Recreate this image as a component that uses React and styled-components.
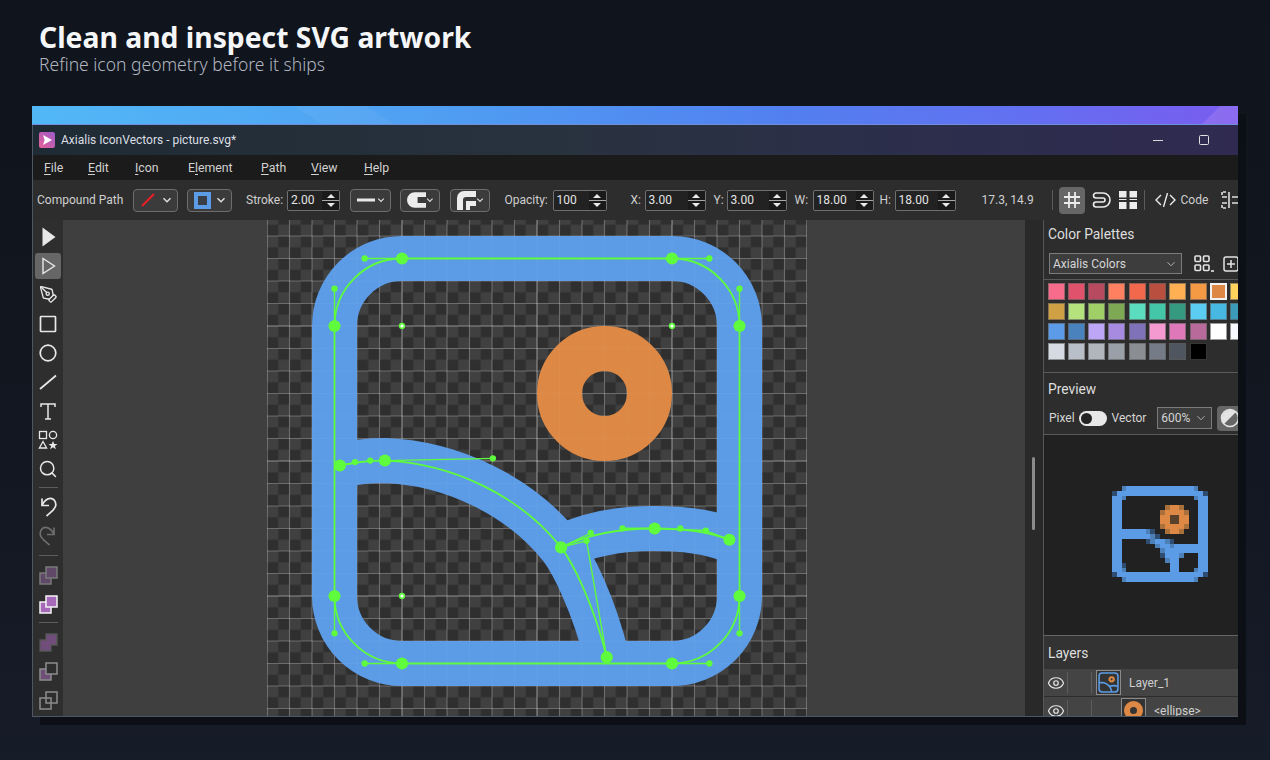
import React from "react";
import styled, { createGlobalStyle } from "styled-components";
import { Search, PenTool, Eye } from "lucide-react";

const GlobalStyle = createGlobalStyle`
  html, body { margin: 0; padding: 0; }
  body {
    width: 1270px;
    height: 760px;
    overflow: hidden;
    background: linear-gradient(180deg, #10141c 0%, #121721 60%, #161c28 100%);
    font-family: "Noto Sans", "Open Sans", sans-serif;
  }
`;

const Page = styled.div`
  padding: 22px 32px 0;
`;

const Hero = styled.header`
  padding-left: 7px;
  height: 84px;
`;

const Title = styled.h1`
  margin: 0;
  font-size: 28.3px;
  line-height: 30px;
  font-weight: 700;
  color: #f5f6f8;
`;

const Subtitle = styled.p`
  margin: 1px 0 0;
  font-size: 17.5px;
  line-height: 22px;
  font-weight: 300;
  color: #b0b6c0;
`;

const Window = styled.div`
  width: 1206px;
  height: 611px;
  display: flex;
  flex-direction: column;
  overflow: hidden;
  background: #2d2d2d;
  box-shadow: 8px 8px 0 #0c0f15;
  font-family: "Roboto", "Noto Sans", sans-serif;
`;

const Strip = styled.div`
  position: relative;
  height: 19px;
  flex: none;
  overflow: hidden;
  background: linear-gradient(90deg, #52b8f6 0%, #4f9df2 35%, #5280f0 62%, #6270f0 82%, #7a5cf0 100%);
  border-bottom: 1px solid #6f8fd8;
  box-sizing: border-box;
  &::after {
    content: "";
    position: absolute;
    top: 0;
    right: 0;
    width: 36px;
    height: 100%;
    background: #9373ef;
    opacity: 0.7;
    clip-path: polygon(50% 0, 100% 0, 100% 100%, 0 100%);
  }
  &::before {
    content: "";
    position: absolute;
    top: 0;
    left: 262px;
    width: 100px;
    height: 100%;
    background: #ffffff;
    opacity: 0.05;
    clip-path: polygon(0 0, 72% 0, 100% 100%, 28% 100%);
  }
`;

const Frame = styled.div`
  flex: 1;
  min-height: 0;
  display: flex;
  flex-direction: column;
  border-left: 1px solid #4d5763;
  border-bottom: 1px solid #4d5763;
`;

const TitleBar = styled.div`
  height: 30px;
  flex: none;
  display: flex;
  align-items: center;
  padding-left: 6px;
  background: linear-gradient(90deg, #1f2b34 0%, #29323f 45%, #2c2e4c 75%, #302a50 100%);
`;

const AppTitle = styled.span`
  margin-left: 6px;
  font-size: 12px;
  color: #dcdfe3;
`;

const WinButtons = styled.div`
  margin-left: auto;
  display: flex;
  align-items: center;
  gap: 36px;
  padding-right: 29px;
`;

const MinButton = styled.span`
  width: 10px;
  height: 1px;
  background: #d8d8d8;
`;

const MaxButton = styled.span`
  width: 8px;
  height: 8px;
  border: 1px solid #e0e0e0;
  border-radius: 1.5px;
`;

const MenuBar = styled.nav`
  height: 25px;
  flex: none;
  display: flex;
  align-items: center;
  padding-left: 11px;
  background: #1b1b1b;
`;

const MenuItem = styled.span`
  flex: none;
  width: ${(p) => p.$w}px;
  font-size: 12.3px;
  color: #d2d2d2;
  u { text-underline-offset: 2px; }
`;

const Toolbar = styled.div`
  height: 40px;
  flex: none;
  display: flex;
  align-items: center;
  padding-left: 4px;
  background: #2d2d2d;
  white-space: nowrap;
`;

const Label = styled.span`
  flex: none;
  margin-left: ${(p) => p.$ml || 0}px;
  width: ${(p) => p.$w}px;
  font-size: 12px;
  color: #cfcfcf;
`;

const DropButton = styled.div`
  flex: none;
  margin-left: ${(p) => p.$ml}px;
  width: ${(p) => p.$w}px;
  height: 23px;
  box-sizing: border-box;
  border: 1px solid #6d6d6d;
  border-radius: 4px;
  background: #3b3b3b;
  display: flex;
  align-items: center;
  justify-content: space-between;
  padding: 0 5px 0 6px;
`;

const Spinner = styled.div`
  flex: none;
  margin-left: ${(p) => p.$ml || 4}px;
  width: ${(p) => p.$w}px;
  height: 21px;
  box-sizing: border-box;
  border: 1px solid #6f6f6f;
  border-radius: 2px;
  background: #222222;
  display: flex;
  align-items: center;
  justify-content: space-between;
  padding-left: 3px;
  font-size: 12px;
  color: #e4e4e4;
`;

const SpinStack = styled.div`
  width: 17px;
  height: 100%;
  display: flex;
  flex-direction: column;
  justify-content: center;
  align-items: center;
  gap: 2px;
  background: #1a1a1a;
`;

const SpinUp = styled.i`
  width: 0;
  height: 0;
  border-left: 4px solid transparent;
  border-right: 4px solid transparent;
  border-bottom: 4px solid #e8e8e8;
`;

const SpinBar = styled.i`
  width: 100%;
  height: 1px;
  background: #a8a8a8;
`;

const SpinDown = styled.i`
  width: 0;
  height: 0;
  border-left: 4px solid transparent;
  border-right: 4px solid transparent;
  border-top: 4px solid #e8e8e8;
`;

const ToolSep = styled.span`
  flex: none;
  margin-left: ${(p) => p.$ml}px;
  width: 1px;
  height: 20px;
  background: #5c5c5c;
`;

const ToolIcon = styled.span`
  flex: none;
  margin-left: ${(p) => p.$ml}px;
  width: ${(p) => p.$w || 26}px;
  height: 27px;
  border-radius: 4px;
  display: flex;
  align-items: center;
  justify-content: center;
  color: #e6e6e6;
  background: ${(p) => (p.$active ? "#666666" : "transparent")};
`;

const Workspace = styled.div`
  flex: 1;
  min-height: 0;
  display: flex;
`;

const Rail = styled.aside`
  width: 30px;
  flex: none;
  padding-top: 2px;
  display: flex;
  flex-direction: column;
  align-items: center;
  background: #2e2e2e;
  overflow: hidden;
`;

const RailButton = styled.div`
  width: 26px;
  height: 26px;
  margin: 1.5px 0;
  flex: none;
  border-radius: 3px;
  display: flex;
  align-items: center;
  justify-content: center;
  color: ${(p) => (p.$dim ? "#6e6e6e" : "#e8e8e8")};
  background: ${(p) => (p.$active ? "#666666" : "transparent")};
`;

const RailSep = styled.div`
  width: 19px;
  height: 1px;
  flex: none;
  margin: ${(p) => p.$m}px 0 ${(p) => p.$b}px;
  background: #5e5e5e;
`;

const Canvas = styled.main`
  flex: 1;
  min-width: 0;
  overflow: hidden;
  background: #3f3f3f;
`;

const Artboard = styled.svg`
  display: block;
  width: 540px;
  height: 540px;
  margin: -29.5px 0 0 204px;
`;

const Gutter = styled.div`
  width: 18px;
  flex: none;
  padding-top: 237px;
  background: #292929;
`;

const ScrollThumb = styled.div`
  width: 3px;
  height: 73px;
  margin-left: 7px;
  border-radius: 2px;
  background: #8c8c8c;
`;

const Panel = styled.aside`
  width: 195px;
  flex: none;
  box-sizing: border-box;
  display: flex;
  flex-direction: column;
  overflow: hidden;
  border-left: 1px solid #565656;
  background: #2d2d2d;
`;

const PanelHeading = styled.div`
  height: ${(p) => p.$h}px;
  flex: none;
  padding: 0 4px;
  display: flex;
  align-items: center;
  font-size: 13.8px;
  color: #dedede;
`;

const PaletteRow = styled.div`
  height: 21px;
  flex: none;
  margin-top: 5px;
  padding-left: 5px;
  display: flex;
  align-items: center;
`;

const PaletteTool = styled.svg`
  flex: none;
  margin-left: ${(p) => p.$ml}px;
`;

const SelectBox = styled.div`
  flex: none;
  width: ${(p) => p.$w}px;
  height: ${(p) => p.$h}px;
  margin-left: ${(p) => p.$ml || 0}px;
  box-sizing: border-box;
  border: 1px solid #7b7b7b;
  background: #3d3d3d;
  display: flex;
  align-items: center;
  justify-content: space-between;
  padding: 0 5px 0 3px;
  font-size: 12px;
  color: #d6d6d6;
`;

const Divider = styled.div`
  height: 1px;
  flex: none;
  margin-top: ${(p) => p.$mt}px;
  background: #5a5a5a;
`;

const Swatches = styled.div`
  padding: 3px 0 0 3.5px;
  display: grid;
  grid-template-columns: repeat(10, 17px);
  grid-auto-rows: 17px;
  column-gap: 3.3px;
  row-gap: 3px;
`;

const Swatch = styled.div`
  box-sizing: border-box;
  background: ${(p) => p.$color};
  border: ${(p) => (p.$selected ? "2px solid #f2f2f2" : "1px solid rgba(90, 90, 90, 0.6)")};
`;

const PreviewControls = styled.div`
  height: 22px;
  flex: none;
  margin-top: 2px;
  padding-left: 5px;
  display: flex;
  align-items: center;
  font-size: 12px;
  color: #d6d6d6;
`;

const Toggle = styled.div`
  width: 28px;
  height: 15px;
  margin: 0 5px 0 4px;
  flex: none;
  box-sizing: border-box;
  padding: 2px;
  border-radius: 8px;
  background: #e8e8e8;
  &::before {
    content: "";
    display: block;
    width: 11px;
    height: 11px;
    border-radius: 50%;
    background: #232323;
  }
`;

const ContrastButton = styled.div`
  flex: none;
  width: 24px;
  height: 25px;
  margin-left: 5px;
  border-radius: 4px;
  background: #666666;
  display: flex;
  align-items: center;
  padding-left: 3px;
  box-sizing: border-box;
`;

const PreviewArea = styled.div`
  height: 200px;
  flex: none;
  box-sizing: border-box;
  padding: 0 0 2px 68px;
  background: #212121;
  display: flex;
  align-items: center;
`;

const LayersHeading = styled(PanelHeading)`
  background: #333333;
  border-top: 1px solid #666666;
  box-sizing: border-box;
  padding-top: 1px;
`;

const LayerRow = styled.div`
  height: 27px;
  flex: none;
  display: flex;
  align-items: center;
  margin-bottom: 1px;
  background: #444444;
  font-size: 12px;
  color: #cfcfcf;
`;

const EyeCell = styled.div`
  width: 23px;
  flex: none;
  display: flex;
  justify-content: center;
  color: #e8e8e8;
`;

const Cell = styled.div`
  width: ${(p) => p.$w}px;
  height: 22px;
  flex: none;
  box-sizing: border-box;
  border-left: 1px solid #5c5c5c;
`;

const Thumb = styled.div`
  width: 25px;
  height: 25px;
  flex: none;
  box-sizing: border-box;
  margin-left: ${(p) => p.$ml || 0}px;
  border: 1px solid #8a8a8a;
  background: #333333;
  display: flex;
  align-items: center;
  justify-content: center;
`;

const LayerName = styled.span`
  margin: 1px 0 0 8px;
`;

const GREEN = "#5ffb3d";
const BLUE = "#5c9ce6";
const ORANGE = "#dd8844";

const OUTLINE = "M6 3h12a3 3 0 0 1 3 3v12a3 3 0 0 1-3 3H6a3 3 0 0 1-3-3V6a3 3 0 0 1 3-3z";
const SLOPE =
  "M3.24 12.2C3.9 12.05 4.59 11.98 5.24 11.98C8.3 12.1 11.3 13.6 13.07 15.84C13.57 16.49 14.5 18.3 15.1 20.72";
const SWELL = "M13.07 15.84C14.39 15.2 15.8 14.99 17.23 15C18.37 15 19.5 15.09 20.55 15.5";

const BIG_NODES = [
  [6, 3], [18, 3], [21, 6], [21, 18], [18, 21], [6, 21], [3, 6], [3, 18],
  [3.24, 12.2], [5.24, 11.98], [13.07, 15.84], [15.1, 20.72], [17.23, 15], [20.55, 15.5],
];
const HANDLES = [
  [4.34, 3], [19.66, 3], [3, 4.34], [21, 4.34], [21, 19.66], [19.66, 21], [4.34, 21], [3, 19.66],
  [3.91, 12.05], [4.59, 11.98], [10.04, 11.88], [14.39, 15.2], [14.2, 15.55], [15.8, 14.99],
  [18.37, 15], [19.5, 15.09],
];
const ARMS = [
  [5.24, 11.98, 10.04, 11.88], [3.24, 12.2, 4.59, 11.98], [15.1, 20.72, 14.2, 15.55],
  [13.07, 15.84, 14.2, 15.55], [13.07, 15.84, 14.39, 15.2], [17.23, 15, 15.8, 14.99],
  [17.23, 15, 19.5, 15.09], [20.55, 15.5, 19.5, 15.09],
  [6, 3, 4.34, 3], [18, 3, 19.66, 3], [3, 6, 3, 4.34], [21, 6, 21, 4.34],
  [21, 18, 21, 19.66], [18, 21, 19.66, 21], [6, 21, 4.34, 21], [3, 18, 3, 19.66],
];
const PIVOTS = [[6, 6], [18, 6], [6, 18]];

const range = Array.from({ length: 25 }, (_, i) => i);

function GridLines({ weak }) {
  return range.map((i) => {
    const major = i % 6 === 0;
    const alpha = weak ? 0.04 : major ? 0.42 : 0.24;
    return (
      <g key={i} stroke="#ffffff" strokeOpacity={alpha} strokeWidth="0.05">
        <line x1={i} y1="0" x2={i} y2="24" />
        <line x1="0" y1={i} x2="24" y2={i} />
      </g>
    );
  });
}

function ArtboardDrawing() {
  return (
    <Artboard viewBox="0 0 24 24">
      <defs>
        <pattern id="checker" width="1" height="1" patternUnits="userSpaceOnUse">
          <rect width="1" height="1" fill="#2f2f2f" />
          <rect width="0.5" height="0.5" fill="#404040" />
          <rect x="0.5" y="0.5" width="0.5" height="0.5" fill="#404040" />
        </pattern>
      </defs>
      <rect width="24" height="24" fill="url(#checker)" />
      <GridLines />
      <g fill="none" strokeWidth="2">
        <path d={OUTLINE} stroke={BLUE} />
        <path d={SLOPE} stroke={BLUE} />
        <path d={SWELL} stroke={BLUE} />
        <circle cx="15" cy="9" r="2" stroke={ORANGE} />
      </g>
      <GridLines weak />
      <g fill="none" stroke={GREEN} strokeWidth="0.08">
        <path d={OUTLINE} />
        <path d={SLOPE} />
        <path d={SWELL} />
      </g>
      <g stroke={GREEN} strokeWidth="0.06">
        {ARMS.map(([a, b, c, d]) => (
          <line key={`${a}-${b}-${c}-${d}`} x1={a} y1={b} x2={c} y2={d} />
        ))}
      </g>
      <g fill={GREEN}>
        {BIG_NODES.map(([x, y]) => (
          <circle key={`${x}-${y}`} cx={x} cy={y} r="0.27" />
        ))}
        {HANDLES.map(([x, y]) => (
          <circle key={`${x}-${y}`} cx={x} cy={y} r="0.14" />
        ))}
      </g>
      {PIVOTS.map(([x, y]) => (
        <g key={`${x}-${y}`}>
          <circle cx={x} cy={y} r="0.14" fill={GREEN} />
          <circle cx={x} cy={y} r="0.07" fill="#ffffff" />
        </g>
      ))}
    </Artboard>
  );
}

// 20x20 raster of the preview, a = faint edge, b = half edge, # = solid,
// p = half orange, h = hole; the orange ring sits in rows 4-9, columns 10-15
const PIXELS = [
  "..b##############b..",
  "a##################a",
  "##b..............b##",
  "##................##",
  "##.........p##p...##",
  "##........p####p..##",
  "##........##hh##..##",
  "##........##hh##..##",
  "##........p####p..##",
  "#######ba..p##p...##",
  "########ba........##",
  "##.....ab##ba.....##",
  "##.......b##b#######",
  "##........b#########",
  "##........a###b...##",
  "##.........b##....##",
  "##a.........##....##",
  "##b.........##...b##",
  "a##################a",
  "..b##############b..",
];

function pixelFill(ch, x, y) {
  if (y >= 4 && y <= 9 && x >= 10 && x <= 15) {
    if (ch === "p") return "#a9703c";
    if (ch === "h") return "#5a412c";
    return ORANGE;
  }
  if (ch === "a") return "#2f4d70";
  if (ch === "b") return "#4d80b8";
  return BLUE;
}

function PixelIcon() {
  return (
    <svg width="96" height="96" viewBox="0 0 20 20" shapeRendering="crispEdges">
      {PIXELS.map((row, y) =>
        row.split("").map((ch, x) =>
          ch === "." ? null : (
            <rect key={`${x}-${y}`} x={x} y={y} width="1" height="1" fill={pixelFill(ch, x, y)} />
          )
        )
      )}
    </svg>
  );
}

function MiniPicture() {
  return (
    <svg width="21" height="21" viewBox="2 2 20 20" fill="none" strokeWidth="1.5">
      <path d={OUTLINE} stroke={BLUE} />
      <path d={SLOPE} stroke={BLUE} />
      <path d={SWELL} stroke={BLUE} />
      <circle cx="15" cy="9" r="2" stroke={ORANGE} strokeWidth="2" />
    </svg>
  );
}

function AppLogo() {
  return (
    <svg width="16" height="16" viewBox="0 0 16 16">
      <defs>
        <linearGradient id="logo" x1="0" y1="1" x2="1" y2="0">
          <stop offset="0" stopColor="#e8609a" />
          <stop offset="1" stopColor="#9a5cc8" />
        </linearGradient>
      </defs>
      <rect width="16" height="16" rx="2" fill="url(#logo)" />
      <path d="M4 3l9 5-9 5 1.6-5z" fill="#ffffff" />
    </svg>
  );
}

function Chevron({ size = 10, width = 1.4, color = "#e0e0e0" }) {
  return (
    <svg width={size} height={size} viewBox="0 0 10 10" fill="none" stroke={color} strokeWidth={width}>
      <path d="M1.5 3.2 5 6.8l3.5-3.6" />
    </svg>
  );
}

function Spin({ value, w, ml }) {
  return (
    <Spinner $w={w} $ml={ml}>
      {value}
      <SpinStack>
        <SpinUp />
        <SpinBar />
        <SpinDown />
      </SpinStack>
    </Spinner>
  );
}

const S = { fill: "none", stroke: "currentColor", strokeWidth: 1.7 };

const railIcons = {
  arrow: <svg width="24" height="24" viewBox="0 0 24 24"><path d="M6.5 2.5 19.5 12 6.5 21.5z" fill="currentColor" /></svg>,
  direct: <svg width="24" height="24" viewBox="0 0 24 24" {...S} strokeWidth="1.4"><path d="M7 4.5 18.5 12 7 19.5z" /></svg>,
  rect: <svg width="24" height="24" viewBox="0 0 24 24" {...S}><rect x="4.5" y="4.5" width="15" height="15" rx="0.6" /></svg>,
  circle: <svg width="24" height="24" viewBox="0 0 24 24" {...S}><circle cx="12" cy="12" r="7.8" /></svg>,
  line: <svg width="24" height="24" viewBox="0 0 24 24" {...S}><path d="M4 19 20 5.5" /></svg>,
  text: <svg width="24" height="24" viewBox="0 0 24 24" {...S} strokeWidth="1.5"><path d="M5 8V5h14v3M12 5v15M9 20h6" /></svg>,
  shapes: (
    <svg width="24" height="24" viewBox="0 0 24 24" {...S} strokeWidth="1.3">
      <rect x="3.5" y="3.5" width="7" height="7" />
      <circle cx="17" cy="7" r="3.6" />
      <path d="M7 13.5l3.6 6.5H3.4z" />
      <path d="M17 13l1.3 3h3.2l-2.6 2 1 3.2-2.9-1.9-2.9 1.9 1-3.2-2.6-2h3.2z" fill="currentColor" stroke="none" />
    </svg>
  ),
  undo: <svg width="24" height="24" viewBox="0 0 24 24" {...S}><path d="M6 4.5v7h7" /><path d="M6 11.5C8 7 11 4.3 14.5 4.3c3 0 5.5 3 5.3 7-.2 4-5 7-9.3 10.7" /></svg>,
  redo: <svg width="24" height="24" viewBox="0 0 24 24" {...S}><path d="M18 4.5v7h-7" /><path d="M18 11.5C16 7 13 4.3 9.5 4.3c-3 0-5.5 3-5.3 7 .2 4 5 7 9.3 10.7" /></svg>,
};

function Overlap({ back, front, stroke, opacity = 1, union }) {
  return (
    <svg width="24" height="24" viewBox="0 0 24 24" opacity={opacity}>
      {union ? (
        <path d="M10 4h11v11h-6v6H4V10h6z" fill="#a668b8" stroke={stroke} strokeWidth="1.3" />
      ) : (
        <g stroke={stroke} strokeWidth="1.5">
          <rect x="4" y="10" width="11" height="11" fill={back} />
          <rect x="10" y="4" width="11" height="11" fill={front} />
        </g>
      )}
    </svg>
  );
}

const MENU = [
  [<><u>F</u>ile</>, 44],
  [<><u>E</u>dit</>, 47],
  [<><u>I</u>con</>, 53],
  [<>E<u>l</u>ement</>, 73],
  [<><u>P</u>ath</>, 50],
  [<><u>V</u>iew</>, 53],
  [<><u>H</u>elp</>, 40],
];

const SWATCHES = [
  "#f76c8a", "#e0526b", "#b84a60", "#ff7f61", "#f2684c", "#b84f3f", "#ffb053", "#f49a45", "#dd8844", "#ffd35c",
  "#cfa044", "#b5e27c", "#a0cf68", "#7fa854", "#5cdcbf", "#43c7a8", "#359a80", "#5bcdf3", "#46b8e2", "#3a9ab8",
  "#5b9be8", "#4a82bd", "#bda6f5", "#a78be0", "#7f72b8", "#f49ad0", "#df78b8", "#b86a9a", "#ffffff", "#f8f9ff",
  "#d6dbe3", "#b8bfc9", "#b0b6bc", "#9aa0a8", "#8a8e92", "#767b88", "#50565f", "#000000",
];

function App() {
  return (
    <Page>
      <GlobalStyle />
      <Hero>
        <Title>Clean and inspect SVG artwork</Title>
        <Subtitle>Refine icon geometry before it ships</Subtitle>
      </Hero>

      <Window>
        <Strip />
        <Frame>
          <TitleBar>
            <AppLogo />
            <AppTitle>Axialis IconVectors - picture.svg*</AppTitle>
            <WinButtons>
              <MinButton />
              <MaxButton />
            </WinButtons>
          </TitleBar>

          <MenuBar>
            {MENU.map(([text, w], i) => (
              <MenuItem key={i} $w={w}>{text}</MenuItem>
            ))}
          </MenuBar>

          <Toolbar>
            <Label $w={85}>Compound Path</Label>
            <DropButton $ml={11} $w={45}>
              <svg width="16" height="16" viewBox="0 0 16 16"><path d="M2 14 14 2" stroke="#ee1c25" strokeWidth="2" /></svg>
              <Chevron />
            </DropButton>
            <DropButton $ml={9} $w={45}>
              <svg width="17" height="17" viewBox="0 0 17 17"><rect width="17" height="17" fill={BLUE} /><rect x="4" y="4" width="9" height="9" fill="#3a3f47" /></svg>
              <Chevron />
            </DropButton>
            <Label $ml={14} $w={37}>Stroke:</Label>
            <Spin value="2.00" w={53} />
            <DropButton $ml={9.5} $w={41}>
              <svg width="18" height="4" viewBox="0 0 18 4"><rect width="18" height="3" y="0.5" fill="#e8e8e8" /></svg>
              <Chevron size={8} />
            </DropButton>
            <DropButton $ml={9.5} $w={40}>
              <svg width="20" height="16" viewBox="0 0 20 16"><path d="M8 0h12v5h-9v6h9v5H8a8 8 0 0 1 0-16z" fill="#ececec" /></svg>
              <Chevron size={8} />
            </DropButton>
            <DropButton $ml={9.5} $w={40}>
              <svg width="19" height="19" viewBox="0 0 19 19"><path d="M0 19V7a7 7 0 0 1 7-7h12v6H9a3 3 0 0 0-3 3v10z" fill="#ececec" /><path d="M9 19v-9h10v5h-6v4z" fill="#ececec" /></svg>
              <Chevron size={8} />
            </DropButton>
            <Label $ml={15} $w={44}>Opacity:</Label>
            <Spin value="100" w={54} />
            <Label $ml={24} $w={10}>X:</Label>
            <Spin value="3.00" w={61} />
            <Label $ml={8} $w={9}>Y:</Label>
            <Spin value="3.00" w={60} />
            <Label $ml={8} $w={15}>W:</Label>
            <Spin value="18.00" w={61} ml={3} />
            <Label $ml={6} $w={11}>H:</Label>
            <Spin value="18.00" w={61} />
            <Label $ml={26} $w={49}>17.3, 14.9</Label>
            <ToolSep $ml={21} />
            <ToolIcon $ml={6} $active>
              <svg width="18" height="18" viewBox="0 0 18 18" stroke="#ececec" strokeWidth="1.8"><path d="M6 1v16M12 1v16M1 6h16M1 12h16" /></svg>
            </ToolIcon>
            <ToolIcon $ml={4} $w={24}>
              <svg width="20" height="18" viewBox="0 0 20 18" fill="none" stroke="#ececec" strokeWidth="1.6"><path d="M5 2h7a7 7 0 0 1 0 14H5M5 2a2.5 2.5 0 0 0 0 5h7a2 2 0 0 1 0 4H5a2.5 2.5 0 0 0 0 5" /></svg>
            </ToolIcon>
            <ToolIcon $ml={5} $w={20}>
              <svg width="18" height="18" viewBox="0 0 18 18" fill="#ececec"><rect width="7.5" height="6.5" /><rect x="10.5" width="7.5" height="6.5" /><rect y="8" width="7.5" height="1" /><rect x="10.5" y="8" width="7.5" height="1" /><rect y="11" width="7.5" height="7" /><rect x="10.5" y="11" width="7.5" height="7" /></svg>
            </ToolIcon>
            <ToolSep $ml={6} />
            <ToolIcon $ml={10} $w={22}>
              <svg width="21" height="14" viewBox="0 0 21 14" fill="none" stroke="#ececec" strokeWidth="1.4"><path d="M6 2 1 7l5 5M15 2l5 5-5 5M12.5 0 8.5 14" /></svg>
            </ToolIcon>
            <Label $ml={4} $w={29}>Code</Label>
            <ToolIcon $ml={11} $w={18}>
              <svg width="18" height="18" viewBox="0 0 18 18" fill="none" stroke="#e0e0e0" strokeWidth="1.6"><path d="M1 6h5M1 12h5M8 1v16M11 6h7M11 12h7M1 1v3M1 14v3M2 1h3M2 17h3" /></svg>
            </ToolIcon>
          </Toolbar>

          <Workspace>
            <Rail>
              <RailButton>{railIcons.arrow}</RailButton>
              <RailButton $active>{railIcons.direct}</RailButton>
              <RailButton><PenTool size={19} strokeWidth={1.7} /></RailButton>
              <RailButton>{railIcons.rect}</RailButton>
              <RailButton>{railIcons.circle}</RailButton>
              <RailButton>{railIcons.line}</RailButton>
              <RailButton>{railIcons.text}</RailButton>
              <RailButton>{railIcons.shapes}</RailButton>
              <RailButton><Search size={20} strokeWidth={1.8} /></RailButton>
              <RailSep $m={4} $b={3} />
              <RailButton>{railIcons.undo}</RailButton>
              <RailButton $dim>{railIcons.redo}</RailButton>
              <RailSep $m={6} $b={4} />
              <RailButton><Overlap back="#6d4f78" front="#6d4f78" stroke="#8d8d8d" opacity={0.8} /></RailButton>
              <RailButton><Overlap back="#a668b8" front="#a668b8" stroke="#f4f4f4" /></RailButton>
              <RailSep $m={4} $b={4} />
              <RailButton><Overlap union stroke="#777" opacity={0.55} /></RailButton>
              <RailButton><Overlap back="#6d4f78" front="#2e2e2e" stroke="#8d8d8d" /></RailButton>
              <RailButton><Overlap back="none" front="none" stroke="#8d8d8d" /></RailButton>
            </Rail>

            <Canvas>
              <ArtboardDrawing />
            </Canvas>

            <Gutter>
              <ScrollThumb />
            </Gutter>

            <Panel>
              <PanelHeading $h={28}>Color Palettes</PanelHeading>
              <PaletteRow>
                <SelectBox $w={133} $h={21}>
                  Axialis Colors
                  <Chevron color="#b0b0b0" width={1} />
                </SelectBox>
                <PaletteTool $ml={12} width="20" height="18" viewBox="0 0 20 18" fill="none" stroke="#e4e4e4" strokeWidth="1.6">
                  <rect x="1" y="1" width="5.5" height="5.5" rx="1" />
                  <rect x="9.5" y="1" width="5.5" height="5.5" rx="1" />
                  <rect x="1" y="10" width="5.5" height="5.5" rx="1" />
                  <rect x="9.5" y="10" width="5.5" height="5.5" rx="1" />
                  <path d="M17 16h3" />
                </PaletteTool>
                <PaletteTool $ml={9} width="16" height="16" viewBox="0 0 16 16" fill="none" stroke="#e4e4e4" strokeWidth="1.5">
                  <rect x="1" y="1" width="14" height="14" rx="2" />
                  <path d="M8 4v8M4 8h8" />
                </PaletteTool>
              </PaletteRow>
              <Divider $mt={5} />
              <Swatches>
                {SWATCHES.map((color, i) => (
                  <Swatch key={i} $color={color} $selected={i === 8} />
                ))}
              </Swatches>
              <Divider $mt={12} />
              <PanelHeading $h={32}>Preview</PanelHeading>
              <PreviewControls>
                Pixel
                <Toggle />
                Vector
                <SelectBox $w={55} $h={22} $ml={11}>
                  600%
                  <Chevron color="#b0b0b0" width={1} />
                </SelectBox>
                <ContrastButton>
                  <svg width="20" height="20" viewBox="0 0 20 20">
                    <circle cx="10" cy="10" r="8.5" fill="none" stroke="#e4e4e4" strokeWidth="1.6" />
                    <path d="M4 16 16 4a8.5 8.5 0 0 0-12 12z" fill="#e4e4e4" />
                  </svg>
                </ContrastButton>
              </PreviewControls>
              <Divider $mt={5} />
              <PreviewArea>
                <PixelIcon />
              </PreviewArea>
              <LayersHeading $h={34}>Layers</LayersHeading>
              <LayerRow>
                <EyeCell><Eye size={18} strokeWidth={1.6} /></EyeCell>
                <Cell $w={24} />
                <Cell $w={5} />
                <Thumb><MiniPicture /></Thumb>
                <LayerName>Layer_1</LayerName>
              </LayerRow>
              <LayerRow>
                <EyeCell><Eye size={18} strokeWidth={1.6} /></EyeCell>
                <Cell $w={24} />
                <Cell $w={5} />
                <Thumb $ml={25}>
                  <svg width="21" height="21" viewBox="0 0 21 21"><circle cx="10.5" cy="10.5" r="6.5" fill="none" stroke={ORANGE} strokeWidth="6" /></svg>
                </Thumb>
                <LayerName>&lt;ellipse&gt;</LayerName>
              </LayerRow>
            </Panel>
          </Workspace>
        </Frame>
      </Window>
    </Page>
  );
}

export default App;
